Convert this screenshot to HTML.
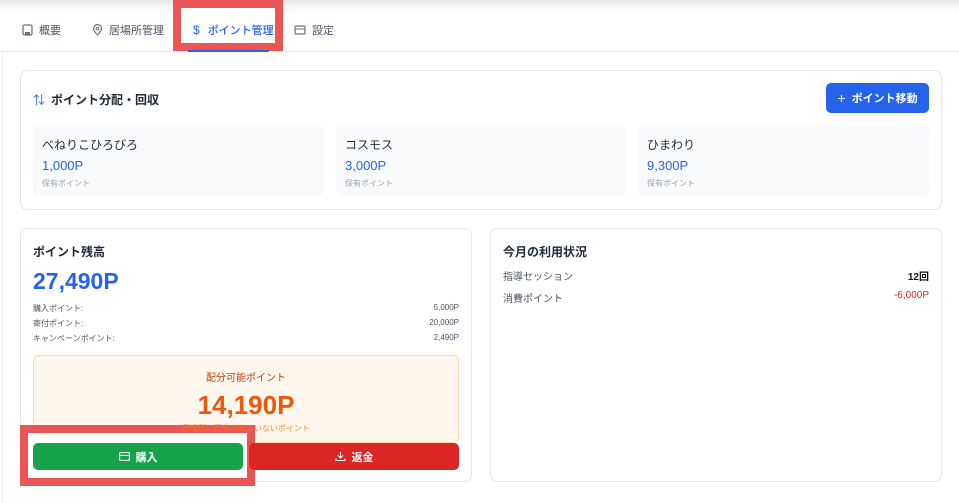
<!DOCTYPE html>
<html><head><meta charset="utf-8"><style>
*{box-sizing:border-box;margin:0;padding:0}
body{width:959px;height:503px;overflow:hidden;background:#fff;font-family:"Liberation Sans","Noto Sans CJK JP",sans-serif;position:relative;color:#1f2937}
.a{position:absolute}
.card{position:absolute;border:1px solid #e5e7eb;border-radius:7px;background:#fff}
.sub{position:absolute;background:#f8fafc;border-radius:6px;top:125px;height:71px}
.sub .n{position:absolute;left:9px;top:11px;font-size:12px;color:#1f2937}
.sub .v{position:absolute;left:9px;top:33px;font-size:13px;color:#2563eb;font-weight:500}
.sub .l{position:absolute;left:9px;top:53px;font-size:8px;color:#9ca3af}
.tab{position:absolute;top:22px;font-size:11px;color:#4b5563;display:flex;align-items:center;gap:6px}
.row{position:absolute;left:33px;width:426px;font-size:8px;color:#4b5563;display:flex;justify-content:space-between}
</style></head><body>
<div class="a" style="left:0;top:0;width:959px;height:12px;background:linear-gradient(#e8e8e8,#fff)"></div>
<div class="a" style="left:0;top:51px;width:959px;height:1px;background:#e5e7eb"></div>
<div class="a" style="left:2px;top:52px;width:1px;height:451px;background:#eee"></div>

<div class="tab" style="left:22px"><svg width="11" height="12" viewBox="0 0 11 12"><rect x="1" y="1" width="9" height="10" rx="1.5" fill="none" stroke="#6b7280" stroke-width="1.3"/><rect x="3" y="8" width="5" height="3" fill="#6b7280"/></svg>概要</div>
<div class="tab" style="left:92px"><svg width="11" height="12" viewBox="0 0 11 12"><path d="M5.5 11C2 7.5 1.5 6 1.5 4.5a4 4 0 0 1 8 0c0 1.5-.5 3-4 6.5z" fill="none" stroke="#6b7280" stroke-width="1.2"/><circle cx="5.5" cy="4.5" r="1.4" fill="none" stroke="#6b7280"/></svg>居場所管理</div>

<div class="a" style="left:173px;top:0;width:110px;height:51px;border:8px solid #ea5656;background:#fff"></div>
<div class="tab" style="left:193px;color:#2563eb;font-weight:500;gap:8px"><span style="font-size:12px">$</span>ポイント管理</div>
<div class="a" style="left:188px;top:50px;width:81px;height:2px;background:#2563eb"></div>
<div class="tab" style="left:294px"><svg width="12" height="10" viewBox="0 0 12 10"><rect x="1" y="1" width="10" height="8" rx="1" fill="none" stroke="#6b7280" stroke-width="1.2"/><line x1="1" y1="4" x2="11" y2="4" stroke="#6b7280"/></svg>設定</div>

<div class="card" style="left:20px;top:70px;width:922px;height:140px"></div>
<div class="a" style="left:33px;top:91px;font-size:12px;font-weight:bold;color:#1f2937"><span style="color:#2563eb;font-weight:normal;margin-right:6px">⇅</span>ポイント分配・回収</div>
<div class="a" style="left:826px;top:83px;width:103px;height:30px;background:#2563eb;border-radius:5px;color:#fff;font-size:11px;font-weight:bold;display:flex;align-items:center;justify-content:center;gap:6px"><span style="font-weight:normal;font-size:14px">+</span>ポイント移動</div>
<div class="sub" style="left:33px;width:291px"><div class="n">べねりこひろびろ</div><div class="v">1,000P</div><div class="l">保有ポイント</div></div>
<div class="sub" style="left:336px;width:290px"><div class="n">コスモス</div><div class="v">3,000P</div><div class="l">保有ポイント</div></div>
<div class="sub" style="left:638px;width:291px"><div class="n">ひまわり</div><div class="v">9,300P</div><div class="l">保有ポイント</div></div>

<div class="card" style="left:20px;top:228px;width:452px;height:254px"></div>
<div class="a" style="left:33px;top:243px;font-size:12px;font-weight:bold">ポイント残高</div>
<div class="a" style="left:33px;top:268px;font-size:23px;font-weight:bold;color:#2563eb">27,490P</div>
<div class="row" style="top:303px"><span>購入ポイント:</span><span>5,000P</span></div>
<div class="row" style="top:318px"><span>寄付ポイント:</span><span>20,000P</span></div>
<div class="row" style="top:333px"><span>キャンペーンポイント:</span><span>2,490P</span></div>
<div class="a" style="left:33px;top:355px;width:426px;height:88px;background:#fff7ed;border:1px solid #fed7aa;border-radius:5px"></div>
<div class="a" style="left:33px;top:369px;width:426px;text-align:center;font-size:10px;color:#c2410c">配分可能ポイント</div>
<div class="a" style="left:33px;top:390px;width:426px;text-align:center;font-size:26px;font-weight:bold;color:#ea580c">14,190P</div>

<div class="a" style="left:20px;top:425px;width:235px;height:61px;border:8px solid #ea5656;background:#fff"></div>
<div class="a" style="left:33px;top:423px;width:426px;text-align:center;font-size:8px;color:#f97316;opacity:.85">居場所に配分されていないポイント</div>
<div class="a" style="left:33px;top:443px;width:210px;height:27px;background:#16a34a;border-radius:5px;color:#fff;font-size:11px;font-weight:bold;display:flex;align-items:center;justify-content:center;gap:6px"><svg width="11" height="9" viewBox="0 0 11 9"><rect x=".6" y=".6" width="9.8" height="7.8" rx="1" fill="none" stroke="#fff" stroke-width="1.1"/><line x1="0.6" y1="3.5" x2="10.4" y2="3.5" stroke="#fff"/></svg>購入</div>
<div class="a" style="left:249px;top:443px;width:210px;height:27px;background:#dc2626;border-radius:5px;color:#fff;font-size:11px;font-weight:bold;display:flex;align-items:center;justify-content:center;gap:6px"><svg width="11" height="11" viewBox="0 0 11 11"><path d="M5.5 1v6M3 4.5l2.5 2.5 2.5-2.5M1 7.5v2h9v-2" fill="none" stroke="#fff" stroke-width="1.1"/></svg>返金</div>

<div class="card" style="left:490px;top:228px;width:452px;height:254px"></div>
<div class="a" style="left:503px;top:243px;font-size:12px;font-weight:bold">今月の利用状況</div>
<div class="a" style="left:503px;top:268px;font-size:10px;color:#4b5563">指導セッション</div>
<div class="a" style="right:30px;top:268px;font-size:10px;font-weight:bold;color:#111">12回</div>
<div class="a" style="left:503px;top:290px;font-size:10px;color:#4b5563">消費ポイント</div>
<div class="a" style="right:30px;top:290px;font-size:10px;color:#dc2626">-6,000P</div>
</body></html>
